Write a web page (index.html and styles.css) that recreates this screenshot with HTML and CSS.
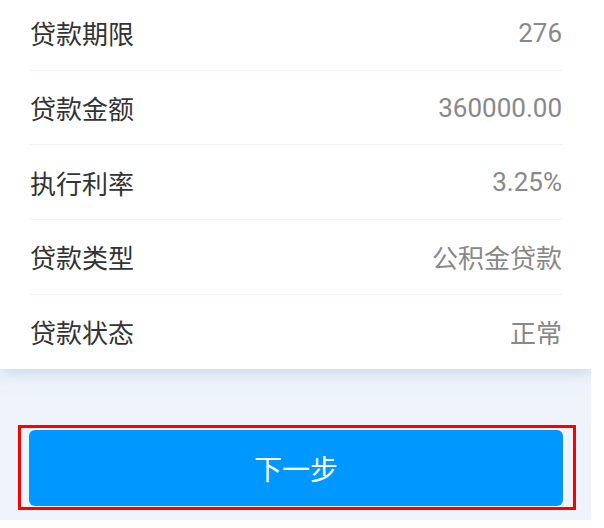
FILE: index.html
```html
<!DOCTYPE html>
<html lang="zh-CN">
<head>
  <meta charset="UTF-8">
  <title>贷款信息</title>
  <meta name="viewport" content="width=device-width, initial-scale=1.0">
  <link rel="stylesheet" href="styles.css">
</head>
<body>
<div class="page">
  <div class="card">
    <div class="row"><span class="label">贷款期限</span><span class="value">276</span></div>
    <div class="row"><span class="label">贷款金额</span><span class="value">360000.00</span></div>
    <div class="row"><span class="label">执行利率</span><span class="value">3.25%</span></div>
    <div class="row"><span class="label">贷款类型</span><span class="value">公积金贷款</span></div>
    <div class="row"><span class="label">贷款状态</span><span class="value">正常</span></div>
  </div>

  <div class="footer">
    <div class="btn-wrap">
      <button class="btn btn-next">下一步</button>
      <div class="highlight"></div>
    </div>
  </div>
</div>
</body>
</html>
```

FILE: styles.css
```css
body {
  margin: 0;
  padding: 0;
  background: #fff;
  font-family: Roboto, "Noto Sans CJK SC", sans-serif;
}

.page {
  width: 591px;
  height: 520px;
  background: #eff4fc;
  overflow: hidden;
  display: flex;
  flex-direction: column;
}

.card {
  margin-top: -4px;
  background: #fff;
  padding: 0 28px 0 29px;
  box-shadow: 0 4px 14px rgba(160, 185, 220, 0.5);
  position: relative;
}

.row {
  height: 74.7px;
  box-sizing: border-box;
  display: flex;
  align-items: center;
  justify-content: space-between;
  border-bottom: 1px solid #eef2f8;
  font-size: 26px;
}

.row:last-child {
  border-bottom: none;
  height: 74px;
}

.label {
  color: #333;
  padding-left: 1px;
}

.value {
  color: #888;
  padding-right: 1px;
}

.footer {
  padding: 61px 28px 0 29px;
}

.btn-wrap {
  position: relative;
}

.btn {
  width: 100%;
  height: 76px;
  border: none;
  border-radius: 6px;
  color: #fff;
  font-family: "Noto Sans CJK SC", sans-serif;
  font-size: 28px;
  cursor: pointer;
}

.btn-next {
  background: #0098ff;
}

.highlight {
  position: absolute;
  top: -5px;
  left: -11px;
  right: -13px;
  bottom: -4px;
  border: 3px solid #ff0000;
  pointer-events: none;
}
```
